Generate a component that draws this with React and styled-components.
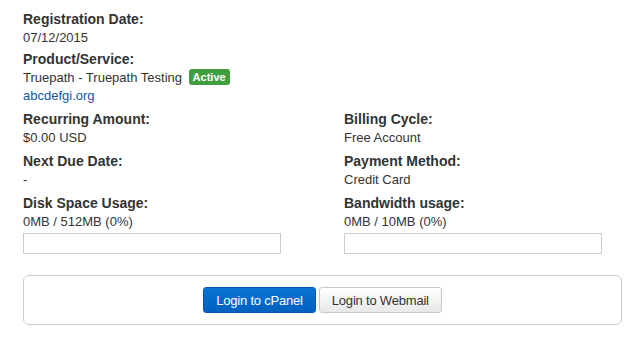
import React from 'react'
import styled, { createGlobalStyle } from 'styled-components'

const GlobalStyle = createGlobalStyle`
  body {
    margin: 0;
    background: #fff;
    font-family: "Liberation Sans", Arial, sans-serif;
    color: #333;
  }
`

const Page = styled.div`
  padding: 10px 3px 0 23px;
  width: 599px;
`

const Field = styled.div`
  margin-bottom: 3px;
`

const Label = styled.div`
  font-size: 14px;
  font-weight: bold;
  line-height: 19px;
`

const Value = styled.div`
  font-size: 13px;
  line-height: 18px;
`

const Link = styled.a`
  display: block;
  font-size: 13px;
  line-height: 17px;
  color: #0a58a8;
  text-decoration: none;
`

const Badge = styled.span`
  display: inline-block;
  background: #3f9f3f;
  color: #fff;
  font-size: 11px;
  font-weight: bold;
  line-height: 14px;
  padding: 1px 4px;
  border-radius: 3px;
  margin-left: 3px;
  vertical-align: 1px;
`

const Grid = styled.div`
  display: grid;
  grid-template-columns: 321px 1fr;
  row-gap: 2px;
  margin-top: 6px;
`

const Progress = styled.div`
  width: 256px;
  height: 19px;
  border: 1px solid #ccc;
  background: #fff;
  margin-top: 2px;
`

const Well = styled.div`
  margin-top: 18px;
  height: 48px;
  border: 1px solid #ccc;
  border-radius: 6px;
  display: flex;
  align-items: center;
  justify-content: center;
  gap: 3px;
`

const Button = styled.button`
  font-family: "Liberation Sans", Arial, sans-serif;
  font-size: 13px;
  height: 26px;
  padding: 0 12px;
  border-radius: 3px;
  cursor: pointer;
  border: 1px solid ${p => (p.$primary ? '#0059b3' : '#c8c8c8')};
  color: ${p => (p.$primary ? '#fff' : '#333')};
  background: ${p =>
    p.$primary
      ? 'linear-gradient(#0774d4, #0060c0)'
      : 'linear-gradient(#ffffff, #e8e8e8)'};
  letter-spacing: -0.2px;
`

const Info = ({ label, children }) => (
  <Field>
    <Label>{label}</Label>
    <Value>{children}</Value>
  </Field>
)

const App = () => (
  <>
    <GlobalStyle />
    <Page>
      <Info label="Registration Date:">07/12/2015</Info>
      <Field>
        <Label>Product/Service:</Label>
        <Value>
          Truepath - Truepath Testing <Badge>Active</Badge>
        </Value>
        <Link href="#">abcdefgi.org</Link>
      </Field>
      <Grid>
        <Info label="Recurring Amount:">$0.00 USD</Info>
        <Info label="Billing Cycle:">Free Account</Info>
        <Info label="Next Due Date:">-</Info>
        <Info label="Payment Method:">Credit Card</Info>
        <Field>
          <Label>Disk Space Usage:</Label>
          <Value>0MB / 512MB (0%)</Value>
          <Progress />
        </Field>
        <Field>
          <Label>Bandwidth usage:</Label>
          <Value>0MB / 10MB (0%)</Value>
          <Progress />
        </Field>
      </Grid>
      <Well>
        <Button $primary>Login to cPanel</Button>
        <Button>Login to Webmail</Button>
      </Well>
    </Page>
  </>
)

export default App
